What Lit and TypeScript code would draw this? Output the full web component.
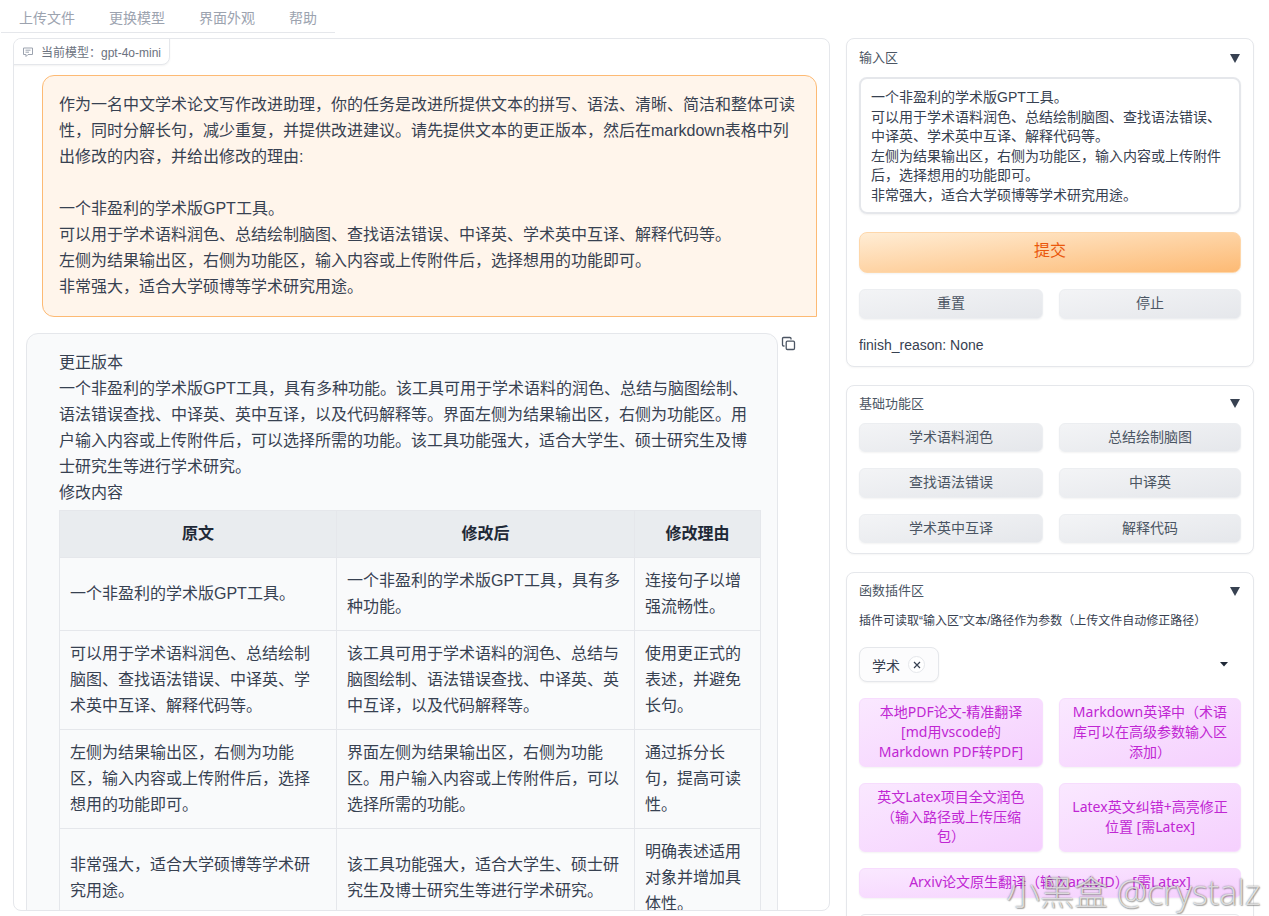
import { LitElement, html, css, svg } from "lit";
import { customElement } from "lit/decorators.js";

const rows = [
  ["一个非盈利的学术版GPT工具。", "一个非盈利的学术版GPT工具，具有多种功能。", "连接句子以增强流畅性。"],
  ["可以用于学术语料润色、总结绘制脑图、查找语法错误、中译英、学术英中互译、解释代码等。", "该工具可用于学术语料的润色、总结与脑图绘制、语法错误查找、中译英、英中互译，以及代码解释等。", "使用更正式的表述，并避免长句。"],
  ["左侧为结果输出区，右侧为功能区，输入内容或上传附件后，选择想用的功能即可。", "界面左侧为结果输出区，右侧为功能区。用户输入内容或上传附件后，可以选择所需的功能。", "通过拆分长句，提高可读性。"],
  ["非常强大，适合大学硕博等学术研究用途。", "该工具功能强大，适合大学生、硕士研究生及博士研究生等进行学术研究。", "明确表述适用对象并增加具体性。"],
];

const tri = svg`<polygon points="0,0 10,0 5,9" fill="#374151"></polygon>`;

@customElement("app-root")
export class AppRoot extends LitElement {
  static styles = css`
    :host {
      display: block;
      width: 1269px;
      height: 916px;
      overflow: hidden;
      position: relative;
      background: #fff;
      font-family: "Liberation Sans", "Noto Sans CJK SC", sans-serif;
      color: #374151;
      text-spacing-trim: space-all;
    }
    .tabs {
      display: flex;
      width: 334px;
      height: 32px;
      margin-left: 1px;
      border-bottom: 1px solid #e5e7eb;
      box-sizing: content-box;
    }
    .tab {
      padding: 0 18px 0 18px;
      margin-right: -2px;
      font-size: 14px;
      line-height: 36px;
      color: #9ca3af;
      white-space: nowrap;
    }
    .main {
      display: flex;
      gap: 16px;
      padding: 5px 0 0 13px;
      align-items: flex-start;
    }
    .chat {
      position: relative;
      width: 817px;
      height: 873px;
      box-sizing: border-box;
      border: 1px solid #e5e7eb;
      border-radius: 8px;
      overflow: hidden;
      display: flex;
      flex-direction: column;
      padding: 36px 12px 0;
      flex: none;
    }
    .model {
      position: absolute;
      left: -1px;
      top: -1px;
      height: 27px;
      box-sizing: border-box;
      display: flex;
      align-items: center;
      gap: 6px;
      padding: 0 0 0 8px;
      border: 1px solid #e5e7eb;
      border-radius: 0 0 8px 0;
      box-shadow: 0 1px 2px rgba(0, 0, 0, 0.05);
      background: #fff;
      font-size: 12px;
      color: #6b7280;
      white-space: nowrap;
      width: 157px;
    }
    .model svg { flex: none; margin-right: 1px; }
    .msg {
      font-size: 16px;
      line-height: 26px;
      color: #374151;
      box-sizing: border-box;
      flex: none;
    }
    .user {
      align-self: flex-end;
      width: 775px;
      height: 242px;
      padding: 16px 16px 8px;
      background: #fff5eb;
      border: 1px solid #fdba74;
      border-radius: 12px 12px 0 12px;
    }
    .gap { height: 26px; }
    .botwrap {
      position: relative;
      flex: none;
      margin-top: 16px;
      width: 752px;
    }
    .bot {
      width: 752px;
      padding: 16px 16px 16px 32px;
      background: #f9fafb;
      border: 1px solid #e5e7eb;
      border-radius: 12px 12px 0 0;
    }
    .copy {
      position: absolute;
      left: 755px;
      top: 3px;
    }
    table {
      margin-top: 4px;
      border-collapse: collapse;
      table-layout: fixed;
      width: 701px;
    }
    .c1 { width: 277px; }
    .c2 { width: 298px; }
    .c3 { width: 126px; }
    th, td {
      border: 1px solid #e5e7eb;
      padding: 10px;
      box-sizing: border-box;
      text-align: left;
      font-weight: 400;
    }
    td:first-child { padding-right: 12px; }
    th {
      background: #e9ecef;
      text-align: center;
      font-weight: 700;
      color: #1f2937;
    }
    .side {
      width: 408px;
      flex: none;
      display: flex;
      flex-direction: column;
      gap: 18px;
    }
    .panel {
      box-sizing: border-box;
      border: 1px solid #e5e7eb;
      border-radius: 8px;
      padding: 9px 12px 12px;
      box-shadow: 0 1px 2px rgba(0, 0, 0, 0.04);
      background: #fff;
    }
    .first { padding: 10px 12px 11px; }
    .base { padding-bottom: 10px; }
    .head {
      display: flex;
      justify-content: space-between;
      align-items: center;
      font-size: 13px;
      line-height: 18px;
      height: 18px;
      color: #4b5563;
    }
    .head svg { margin-right: 1px; }
    .ta {
      margin-top: 10px;
      height: 137px;
      box-sizing: border-box;
      padding: 9px 10px;
      border: 2px solid #e5e7eb;
      border-radius: 8px;
      font-size: 14px;
      line-height: 19.6px;
      color: #374151;
      box-shadow: 0 1px 2px rgba(0, 0, 0, 0.05);
    }
    .submit {
      margin-top: 18px;
      height: 41px;
      box-sizing: border-box;
      border: 1px solid #fed7aa;
      border-radius: 8px;
      background: linear-gradient(to bottom right, #ffedd5, #fdba74);
      color: #ea580c;
      font-size: 16px;
      line-height: 20px;
      padding-bottom: 4px;
      display: flex;
      align-items: center;
      justify-content: center;
      box-shadow: 0 1px 2px rgba(0, 0, 0, 0.05);
    }
    .grid {
      display: grid;
      grid-template-columns: 184px 182px;
      column-gap: 16px;
      row-gap: 16px;
    }
    .mt16 { margin-top: 16px; }
    .mt10 { margin-top: 10px; }
    .btn {
      box-sizing: border-box;
      min-height: 29.5px;
      padding: 4px 12px;
      border-radius: 6px;
      border: 1px solid #eceef1;
      background: linear-gradient(to bottom right, #f3f4f6, #e5e7eb);
      font-size: 14px;
      line-height: 19.6px;
      color: #4b5563;
      text-align: center;
      display: flex;
      align-items: center;
      justify-content: center;
      box-shadow: 0 1px 2px rgba(0, 0, 0, 0.05);
    }
    .pink {
      background: linear-gradient(to bottom right, #fae8ff, #f5d0fe);
      border-color: #f7dcfe;
      color: #c026d3;
      padding: 3px 12px 5px;
      font-family: "Noto Sans", "Noto Sans CJK SC", sans-serif;
    }
    .wide { grid-column: 1 / -1; }
    .finish {
      margin-top: 16px;
      font-size: 14px;
      line-height: 20px;
      color: #374151;
    }
    .desc {
      margin-top: 13px;
      font-size: 12px;
      line-height: 17px;
      color: #374151;
    }
    .sel {
      margin-top: 17px;
      margin-bottom: 16px;
      display: flex;
      align-items: center;
      justify-content: space-between;
      padding-right: 13px;
    }
    .chip {
      width: 80px;
      height: 35px;
      box-sizing: border-box;
      border: 1px solid #e5e7eb;
      border-radius: 8px;
      display: flex;
      align-items: center;
      gap: 8px;
      padding-left: 12px;
      font-size: 14px;
      background: #fcfcfd;
      color: #374151;
      box-shadow: 0 1px 2px rgba(0, 0, 0, 0.05);
    }
    .x {
      width: 17px;
      height: 17px;
      box-sizing: border-box;
      border: 1px solid #e5e7eb;
      border-radius: 50%;
      display: flex;
      align-items: center;
      justify-content: center;
      background: #fff;
    }
    .more {
      margin-top: 16px;
      height: 40px;
      border: 1px solid #e5e7eb;
      border-radius: 6px;
    }
    .mark {
      position: absolute;
      left: 1006px;
      top: 872px;
      font-family: "Open Sans", "Noto Sans CJK SC", sans-serif;
      font-weight: 300;
      font-size: 34px;
      line-height: 40px;
      white-space: nowrap;
      color: rgba(255, 255, 255, 0.72);
      text-shadow: 0 0 1.5px rgba(70, 70, 70, 0.8), 1px 1px 1px rgba(100, 100, 100, 0.45);
    }
  `;

  render() {
    return html`
      <div class="tabs">
        ${["上传文件", "更换模型", "界面外观", "帮助"].map((t) => html`<div class="tab">${t}</div>`)}
      </div>
      <div class="main">
        <div class="chat">
          <div class="model">
            <svg width="12" height="12" viewBox="0 0 12 12" fill="none" stroke="#9ca3af" stroke-width="1">
              <path d="M1.5 2h9v6.5H6L4 10.5V8.5H1.5z"></path>
              <path d="M3.5 4.2h5M3.5 6.2h3.5"></path>
            </svg>
            <span>当前模型：gpt-4o-mini</span>
          </div>
          <div class="msg user">
            作为一名中文学术论文写作改进助理，你的任务是改进所提供文本的拼写、语法、清晰、简洁和整体可读性，同时分解长句，减少重复，并提供改进建议。请先提供文本的更正版本，然后在markdown表格中列出修改的内容，并给出修改的理由:
            <div class="gap"></div>
            一个非盈利的学术版GPT工具。<br />
            可以用于学术语料润色、总结绘制脑图、查找语法错误、中译英、学术英中互译、解释代码等。<br />
            左侧为结果输出区，右侧为功能区，输入内容或上传附件后，选择想用的功能即可。<br />
            非常强大，适合大学硕博等学术研究用途。
          </div>
          <div class="botwrap">
            <div class="msg bot">
              更正版本<br />
              一个非盈利的学术版GPT工具，具有多种功能。该工具可用于学术语料的润色、总结与脑图绘制、语法错误查找、中译英、英中互译，以及代码解释等。界面左侧为结果输出区，右侧为功能区。用户输入内容或上传附件后，可以选择所需的功能。该工具功能强大，适合大学生、硕士研究生及博士研究生等进行学术研究。<br />
              修改内容
              <table>
                <colgroup><col class="c1" /><col class="c2" /><col class="c3" /></colgroup>
                <thead><tr><th>原文</th><th>修改后</th><th>修改理由</th></tr></thead>
                <tbody>
                  ${rows.map((r) => html`<tr>${r.map((c) => html`<td>${c}</td>`)}</tr>`)}
                </tbody>
              </table>
            </div>
            <svg class="copy" width="15" height="15" viewBox="0 0 15 15" fill="none" stroke="#4b5563" stroke-width="1.3">
              <path d="M3.5 10H2.6A1.1 1.1 0 0 1 1.5 8.9V2.6A1.1 1.1 0 0 1 2.6 1.5H8.9A1.1 1.1 0 0 1 10 2.6V3.5"></path>
              <rect x="5.2" y="5.2" width="8.3" height="8.3" rx="1.2"></rect>
            </svg>
          </div>
        </div>
        <div class="side">
          <div class="panel first">
            <div class="head"><span>输入区</span><svg width="10" height="9">${tri}</svg></div>
            <div class="ta">
              一个非盈利的学术版GPT工具。<br />
              可以用于学术语料润色、总结绘制脑图、查找语法错误、中译英、学术英中互译、解释代码等。<br />
              左侧为结果输出区，右侧为功能区，输入内容或上传附件后，选择想用的功能即可。<br />
              非常强大，适合大学硕博等学术研究用途。
            </div>
            <div class="submit">提交</div>
            <div class="grid mt16">
              <div class="btn">重置</div>
              <div class="btn">停止</div>
            </div>
            <div class="finish">finish_reason: None</div>
          </div>
          <div class="panel base">
            <div class="head"><span>基础功能区</span><svg width="10" height="9">${tri}</svg></div>
            <div class="grid mt10">
              ${["学术语料润色", "总结绘制脑图", "查找语法错误", "中译英", "学术英中互译", "解释代码"].map(
                (t) => html`<div class="btn">${t}</div>`
              )}
            </div>
          </div>
          <div class="panel">
            <div class="head"><span>函数插件区</span><svg width="10" height="9">${tri}</svg></div>
            <div class="desc">插件可读取“输入区”文本/路径作为参数（上传文件自动修正路径）</div>
            <div class="sel">
              <div class="chip">
                <span>学术</span>
                <span class="x">
                  <svg width="8" height="8" viewBox="0 0 8 8" stroke="#374151" stroke-width="1.2"><path d="M1 1l6 6M7 1L1 7"></path></svg>
                </span>
              </div>
              <svg width="8" height="5"><polygon points="0,0 8,0 4,4.5" fill="#1f2937"></polygon></svg>
            </div>
            <div class="grid">
              <div class="btn pink">本地PDF论文-精准翻译 [md用vscode的 Markdown PDF转PDF]</div>
              <div class="btn pink">Markdown英译中（术语库可以在高级参数输入区添加）</div>
              <div class="btn pink">英文Latex项目全文润色（输入路径或上传压缩包）</div>
              <div class="btn pink">Latex英文纠错+高亮修正位置 [需Latex]</div>
              <div class="btn pink wide">Arxiv论文原生翻译（输入arxivID） [需Latex]</div>
            </div>
            <div class="more"></div>
          </div>
        </div>
      </div>
      <div class="mark">小黑盒 @crystalz</div>
    `;
  }
}
